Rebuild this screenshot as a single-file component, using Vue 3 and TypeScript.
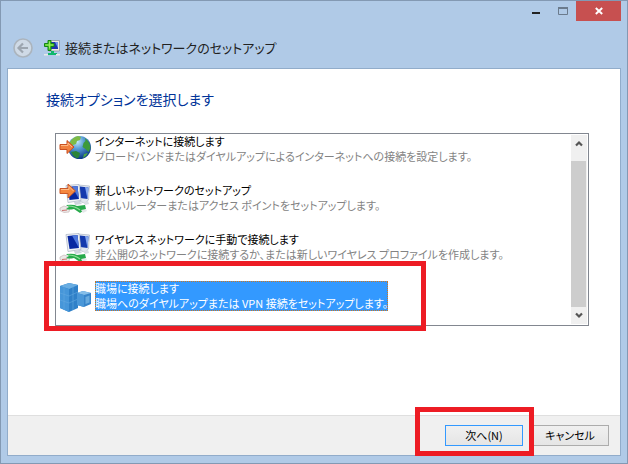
<script setup lang="ts">
import { ref } from 'vue'

interface ConnectionOption {
  id: string
  title: string
  description: string
  icon: 'internet' | 'router' | 'wireless' | 'workplace'
}

const options: ConnectionOption[] = [
  {
    id: 'internet',
    title: 'インターネットに接続します',
    description: 'ブロードバンドまたはダイヤルアップによるインターネットへの接続を設定します。',
    icon: 'internet',
  },
  {
    id: 'router',
    title: '新しいネットワークのセットアップ',
    description: '新しいルーターまたはアクセス ポイントをセットアップします。',
    icon: 'router',
  },
  {
    id: 'wireless',
    title: 'ワイヤレス ネットワークに手動で接続します',
    description: '非公開のネットワークに接続するか、または新しいワイヤレス プロファイルを作成します。',
    icon: 'wireless',
  },
  {
    id: 'workplace',
    title: '職場に接続します',
    description: '職場へのダイヤルアップまたは VPN 接続をセットアップします。',
    icon: 'workplace',
  },
]

const selected = ref('workplace')
</script>

<template>
  <div class="window">
    <header class="titlebar">
      <div class="caption-buttons">
        <button type="button" class="caption minimize" aria-label="最小化">
          <svg width="10" height="10" viewBox="0 0 10 10"><path d="M1 6h8v2H1z" fill="#222" /></svg>
        </button>
        <button type="button" class="caption maximize" aria-label="最大化">
          <svg width="10" height="8" viewBox="0 0 10 8">
            <path d="M.5 1v6.5h9V1" fill="none" stroke="#6b7b8d" /><path d="M0 0h10v2H0z" fill="#6b7b8d" />
          </svg>
        </button>
        <button type="button" class="caption close" aria-label="閉じる">
          <svg width="8" height="8" viewBox="0 0 8 8">
            <path d="M.8 1l6.4 6M7.2 1L.8 7" stroke="#fff" stroke-width="1.9" />
          </svg>
        </button>
      </div>
      <div class="wizard-bar">
        <button type="button" class="back" aria-label="戻る" disabled>
          <svg width="20" height="20" viewBox="0 0 20 20">
            <circle cx="10" cy="10" r="9" fill="#cfdae6" stroke="#abb4bd" stroke-width="1.6" />
            <path d="M15 10H6M10 5.5L5.5 10l4.5 4.5" fill="none" stroke="#9da6b0" stroke-width="2.2" />
          </svg>
        </button>
        <svg class="wizard-icon" width="16" height="16" viewBox="0 0 16 16">
          <path d="M5 .5h10.500v10.500H5z" fill="#ece9df" stroke="#8c97a6" stroke-width=".8" />
          <path d="M7 2h7v7H7z" fill="#1f35b0" />
          <path d="M11 2h3v6z" fill="#7196ec" />
          <path d="M7 11h3v2h3v2H4v-2h3z" fill="#10b86c" />
          <path d="M0 14h4v1.5H0zM12 14h4v1.5h-4z" fill="#e7e9e9" />
          <path d="M4 .5h3v3h3v3H7v4H4v-4H.5v-3H4z" fill="#4dcc27" stroke="#138613" />
          <path d="M5.500 1.500v7M1.500 5h8" stroke="#a2ea65" />
        </svg>
        <h1 class="wizard-title">接続またはネットワークのセットアップ</h1>
      </div>
    </header>

    <main class="panel">
      <section class="content">
        <h2 id="heading" class="heading">接続オプションを選択します</h2>
        <div class="list">
          <div class="options" role="radiogroup" aria-labelledby="heading">
            <label
              v-for="option in options"
              :key="option.id"
              class="option"
              :class="{ selected: selected === option.id }"
            >
              <input v-model="selected" class="radio" type="radio" name="connection" :value="option.id" />
              <svg v-if="option.icon === 'internet'" class="icon" width="32" height="32" viewBox="0 0 32 32">
                <defs>
                  <radialGradient id="globe" cx=".4" cy=".25" r=".75">
                    <stop offset="0" stop-color="#c4e8f8" />
                    <stop offset=".4" stop-color="#5b9fd6" />
                    <stop offset="1" stop-color="#0a3a88" />
                  </radialGradient>
                </defs>
                <circle cx="20.500" cy="13.500" r="11.500" fill="url(#globe)" />
                <path d="M11 8q3-5 8-6l3 1-1 3-3 1-1 3-3 1-1 2-3-1z" fill="#7dbb45" />
                <path d="M26 4q5 4 5.500 10l-2 4-3-3-3-2 1-4 2-2z" fill="#3d9a3b" />
                <path d="M12 18l5-1 4 2-1 4-2 1.500q-4-2-6-6.500z" fill="#2b8437" />
                <path d="M25 20l4-1q-2 4-5 5z" fill="#4ea845" />
                <path d="M1 10.500h7V6.500l7 6.500-7 6.500v-4H1z" fill="#f0803f" stroke="#c94f20" />
                <path d="M2 11.500h7V9l4 4" fill="none" stroke="#ffb884" />
              </svg>
              <svg
                v-else-if="option.icon === 'router' || option.icon === 'wireless'"
                class="icon"
                width="32"
                height="32"
                viewBox="0 0 32 32"
              >
                <path d="M19 2l11.500 1-1 14-3.500 3-7-2z" fill="#e2e7ee" stroke="#b4bdca" stroke-width=".8" />
                <path d="M21 3.500l8.500 1-1 11.500-7.500-1z" fill="#1439ad" />
                <path d="M26 4l3.500.5-1 11.500z" fill="#87aaf0" />
                <path d="M7 2.500l13-1 2 16-13 2z" fill="#f1f3f6" stroke="#aeb8c6" stroke-width=".8" />
                <path d="M8.500 4l10-1 1.500 13-9.500 1z" fill="#0827a1" />
                <path d="M13 3.500l5.500-.5 1.500 13z" fill="#4f78dc" />
                <path d="M15 19l5-1 3 3-7 1z" fill="#cdd4dd" />
                <path d="M24 19l5-1 1 3-4 1z" fill="#d9dee4" />
                <path d="M1 25l4-2 6 2-1 4-5 .5-4-2z" fill="#ebe9e8" stroke="#c6b7b7" stroke-width=".7" />
                <path d="M3 27.500l5-.5" stroke="#cc6f6b" />
                <path d="M7 22q8-1 11 1l8-1 1 4-6 4-6-4q-5 1-8 0l3-2z" fill="#27a94b" />
                <path d="M9 23q7 0 12 4" fill="none" stroke="#8ee09a" stroke-width="1.2" />
                <path d="M22 27l5-1 1 2-4 2z" fill="#e5e8ea" />
                <path v-if="option.icon === 'router'" d="M1 5.500h8V1l7.500 7L9 15v-4.500H1z" fill="#f5873f" stroke="#ca5928" />
                <path v-if="option.icon === 'router'" d="M2 6.500h8V3.500l4.500 4.500" fill="none" stroke="#ffbd88" />
              </svg>
              <svg v-else class="icon" width="32" height="32" viewBox="0 0 32 32">
                <path d="M1 5l9-3 9 2v23l-9 4-9-4z" fill="#2f80c8" />
                <path d="M1 5l9-3 9 2-9 4z" fill="#69ade2" />
                <path d="M1 5l9 3v23l-9-4z" fill="#4696d9" />
                <path d="M1 12l9 3 9-4M1 19l9 3 9-4M5 6v23M14 6v23" fill="none" stroke="#62a8df" stroke-width=".6" />
                <path d="M18 12l6-2 8 2v11l-7 3-7-2z" fill="#3784ca" />
                <path d="M18 12l6-2 8 2-7 2z" fill="#85bee9" />
                <path d="M18 12l7 2v12l-7-2z" fill="#4a97d8" />
                <path d="M26.500 16l4-1.500v7l-4 1.500z" fill="#68aade" />
              </svg>
              <span class="option-text">
                <span class="option-title">{{ option.title }}</span>
                <span class="option-description">{{ option.description }}</span>
              </span>
              <span v-if="option.id === 'workplace'" class="highlight highlight-option" />
            </label>
          </div>
          <div class="scrollbar">
            <button type="button" class="scroll-button" aria-label="上へスクロール">
              <svg width="8" height="7" viewBox="0 0 8 7"><path d="M1 5.500l3-3 3 3" fill="none" stroke="#555" stroke-width="2.200" /></svg>
            </button>
            <div class="thumb" />
            <button type="button" class="scroll-button" aria-label="下へスクロール">
              <svg width="8" height="7" viewBox="0 0 8 7"><path d="M1 1.500l3 3 3-3" fill="none" stroke="#555" stroke-width="2.200" /></svg>
            </button>
          </div>
        </div>
      </section>
      <footer class="footer">
        <div class="next-wrap">
          <button type="button" class="button next">次へ(N)</button>
          <span class="highlight highlight-next" />
        </div>
        <button type="button" class="button">キャンセル</button>
      </footer>
    </main>
  </div>
</template>

<style>
body {
  margin: 0;
}
</style>

<style scoped>
.window,
.window * {
  box-sizing: border-box;
}
.window {
  display: flex;
  flex-direction: column;
  min-height: 100vh;
  padding: 0 6px 7px;
  border: 1px solid #8399b3;
  background: #b0cae7;
  font-family: 'Noto Sans CJK JP', sans-serif;
  font-feature-settings: 'palt';
  font-size: 11px;
  line-height: 15px;
  color: #000;
}
button {
  padding: 0;
  border: 0;
  background: none;
  font: inherit;
  font-feature-settings: inherit;
  color: inherit;
}
svg {
  display: block;
  flex: none;
}
.caption-buttons {
  display: flex;
  justify-content: flex-end;
  height: 20px;
}
.caption {
  display: flex;
  align-items: center;
  justify-content: center;
  width: 27px;
}
.close {
  width: 45px;
  background: #c75050;
}
.wizard-bar {
  display: flex;
  align-items: center;
  height: 47px;
  padding: 6px 6px 0;
}
.wizard-icon {
  margin: 0 5px 0 11px;
}
.wizard-title,
.heading {
  margin: 0;
  font-weight: 400;
}
.wizard-title {
  font-size: 13px;
  line-height: 20px;
  color: #222;
}
.panel {
  display: flex;
  flex: 1;
  flex-direction: column;
  border: 1px solid #91acca;
  background: #fff;
}
.content {
  flex: 1;
  padding: 18px 31px 24px 38px;
}
.heading {
  font-size: 14px;
  line-height: 24px;
  color: #003399;
}
.list {
  display: flex;
  min-height: 193px;
  margin: 22px 0 0 9px;
  padding: 0 1px 1px;
  border: 1px solid #828790;
}
.options {
  flex: 1;
  min-width: 0;
}
.option {
  position: relative;
  display: flex;
  gap: 4px;
  height: 49px;
  padding-left: 2px;
}
.option:last-child {
  height: 43px;
}
.radio {
  position: absolute;
  width: 1px;
  height: 1px;
  margin: 0;
  opacity: 0;
}
.option-text {
  display: flex;
  flex-direction: column;
  align-self: flex-start;
  white-space: nowrap;
}
.option-description {
  color: #838383;
}
.selected .option-text {
  outline: 1px dotted #cc7722;
  outline-offset: -1px;
  background: #3399ff;
  color: #fff;
}
.selected .option-description {
  color: #fff;
}
.scrollbar {
  display: flex;
  flex-direction: column;
  width: 16px;
  margin-top: 1px;
  padding-right: 1px;
  background: #f0f0f0;
}
.scroll-button {
  display: flex;
  align-items: center;
  justify-content: center;
  height: 17px;
}
.thumb {
  flex: 1;
  margin-top: 9px;
  background: #cdcdcd;
}
.footer {
  display: flex;
  justify-content: flex-end;
  gap: 8px;
  padding: 9px 11px;
  border-top: 1px solid #dfdfdf;
  background: #f0f0f0;
}
.next-wrap {
  position: relative;
}
.button {
  display: block;
  width: 78px;
  height: 21px;
  border: 1px solid #acacac;
  background: linear-gradient(#f0f0f0, #e5e5e5);
  text-align: center;
}
.next {
  border-color: #3399ff;
}
.highlight {
  position: absolute;
  z-index: 1;
  border: 5px solid #ed1c24;
  pointer-events: none;
}
.highlight-option {
  top: -20px;
  left: -13px;
  width: 382px;
  height: 70px;
}
.highlight-next {
  top: -18px;
  left: -30px;
  width: 119px;
  height: 49px;
}
</style>
